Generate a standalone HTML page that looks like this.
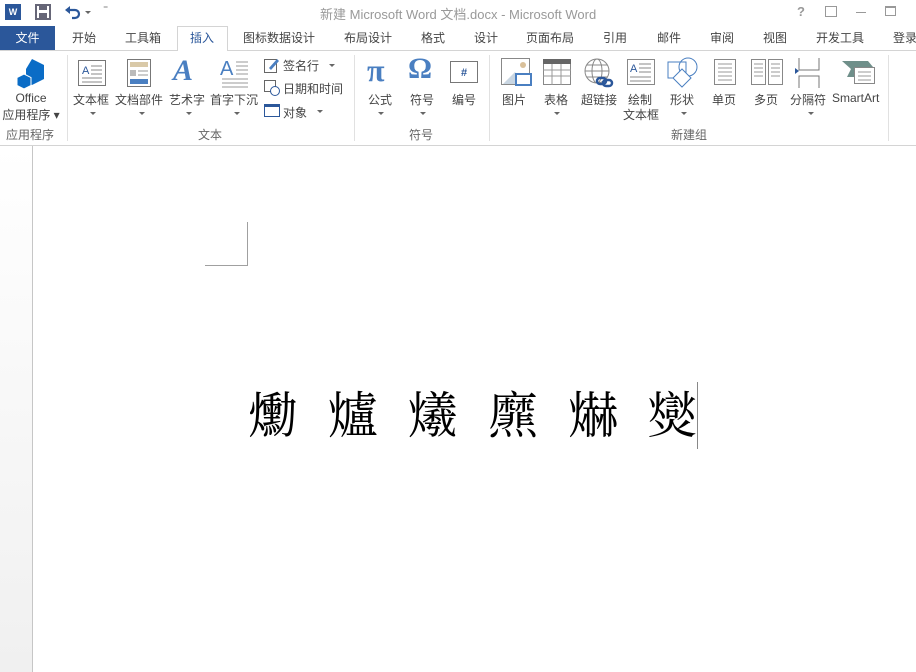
<!DOCTYPE html>
<html><head><meta charset="utf-8"><style>
*{margin:0;padding:0;box-sizing:border-box}
body{width:916px;height:672px;overflow:hidden;background:#fff;font-family:"Liberation Sans","Noto Sans CJK SC",sans-serif;font-size:12px;color:#444;position:relative}
.a{position:absolute;white-space:nowrap}
.tab{position:absolute;top:26px;height:24px;line-height:24px;font-size:12px;color:#444;white-space:nowrap}
.lbl{position:absolute;font-size:12px;color:#444;text-align:center;white-space:nowrap}
.grp{position:absolute;top:126px;font-size:12px;color:#666;white-space:nowrap}
.sep{position:absolute;top:55px;width:1px;height:86px;background:#e1e1e1}
.arr{position:absolute;width:0;height:0;border-left:3px solid transparent;border-right:3px solid transparent;border-top:3px solid #666}
.ch{position:absolute;top:386px;font-family:"Liberation Serif","Noto Serif CJK TC","Noto Serif CJK SC",serif;font-size:50px;color:#000;line-height:60px}
</style></head><body>
<div class="a" style="left:5px;top:4px;width:16px;height:16px;background:#2b579a;color:#fff;font-size:9px;font-weight:bold;line-height:16px;text-align:center">W</div>
<svg class="a" style="left:35px;top:4px" width="16" height="16"><rect x="1" y="1" width="14" height="14" fill="none" stroke="#667" stroke-width="2"/><rect x="4" y="1" width="8" height="5" fill="#667"/><rect x="4" y="9" width="8" height="6" fill="#667"/></svg>
<svg class="a" style="left:64px;top:4px" width="20" height="16"><path d="M4 6 H11 A4 4 0 0 1 11 14 H8" fill="none" stroke="#2b579a" stroke-width="2.2"/><path d="M1 6 L6 2 L6 10 Z" fill="#2b579a"/></svg>
<div class="arr" style="left:85px;top:11px"></div>
<div class="a" style="left:103px;top:4px;color:#666;font-size:10px">⁼</div>
<div class="a" style="left:320px;top:4px;font-size:13px;color:#999">新建 Microsoft Word 文档.docx - Microsoft Word</div>
<div class="a" style="left:797px;top:4px;font-size:13px;color:#999;font-weight:bold">?</div>
<div class="a" style="left:825px;top:6px;width:12px;height:11px;border:1px solid #999"></div>
<div class="a" style="left:856px;top:12px;width:10px;height:1px;background:#999"></div>
<div class="a" style="left:885px;top:6px;width:11px;height:10px;border:1px solid #999;border-top-width:2px"></div>
<div class="a" style="left:0;top:26px;width:55px;height:24px;background:#2b579a;color:#fff;line-height:24px;text-align:center;font-size:12px">文件</div>
<div class="a" style="left:0;top:50px;width:916px;height:1px;background:#d4d4d4"></div>
<div class="a" style="left:177px;top:26px;width:51px;height:25px;background:#fff;border:1px solid #d4d4d4;border-bottom:none"></div>
<div class="tab" style="left:72px">开始</div>
<div class="tab" style="left:125px">工具箱</div>
<div class="tab" style="left:190px;color:#2b579a">插入</div>
<div class="tab" style="left:243px">图标数据设计</div>
<div class="tab" style="left:344px">布局设计</div>
<div class="tab" style="left:421px">格式</div>
<div class="tab" style="left:474px">设计</div>
<div class="tab" style="left:526px">页面布局</div>
<div class="tab" style="left:603px">引用</div>
<div class="tab" style="left:657px">邮件</div>
<div class="tab" style="left:710px">审阅</div>
<div class="tab" style="left:763px">视图</div>
<div class="tab" style="left:816px">开发工具</div>
<div class="tab" style="left:893px">登录</div>
<div class="a" style="left:0;top:145px;width:916px;height:1px;background:#d4d4d4"></div>
<div class="sep" style="left:67px"></div><div class="sep" style="left:354px"></div><div class="sep" style="left:489px"></div><div class="sep" style="left:888px"></div>
<svg class="a" style="left:15px;top:58px" width="32" height="32"><path d="M17 1 L29 7 L29 21 L17 27 L11 24 L11 11 Z" fill="#0a6cc6"/><path d="M9 16 L16 19.5 L16 27.5 L9 31 L2 27.5 L2 19.5 Z" fill="#0a6cc6" stroke="#fff" stroke-width="1"/></svg>
<div class="lbl" style="left:0;top:91px;width:62px">Office</div>
<div class="lbl" style="left:0;top:106px;width:62px">应用程序 ▾</div>
<div class="grp" style="left:6px">应用程序</div>
<svg class="a" style="left:78px;top:60px" width="28" height="26"><rect x="0.5" y="0.5" width="27" height="25" fill="#fff" stroke="#777"/><text x="4" y="14" font-size="11" fill="#2b579a" font-family="Liberation Sans">A</text><path d="M13 6h11M13 10h11M13 14h11M4 18h20M4 22h20" stroke="#888"/></svg>
<div class="lbl" style="left:73px;top:91px">文本框</div><div class="arr" style="left:90px;top:112px"></div>
<svg class="a" style="left:127px;top:59px" width="24" height="28"><rect x="0.5" y="0.5" width="23" height="27" fill="#fff" stroke="#777"/><rect x="3" y="3" width="18" height="5" fill="#d9c9a8"/><rect x="3" y="11" width="6" height="6" fill="#bbb"/><path d="M11 12h10M11 16h10" stroke="#999"/><rect x="3" y="20" width="18" height="5" fill="#4a7fc1"/></svg>
<div class="lbl" style="left:115px;top:91px">文档部件</div><div class="arr" style="left:139px;top:112px"></div>
<div class="a" style="left:173px;top:54px;font-size:30px;font-style:italic;color:#4a7fc1;font-family:'Liberation Serif',serif;font-weight:bold">A</div>
<div class="lbl" style="left:169px;top:91px">艺术字</div><div class="arr" style="left:186px;top:112px"></div>
<svg class="a" style="left:220px;top:58px" width="30" height="30"><text x="0" y="17" font-size="20" fill="#4a7fc1" font-family="Liberation Sans">A</text><path d="M16 4h12M16 8h12M16 12h12M16 16h12M2 21h26M2 25h26M2 29h26" stroke="#999"/></svg>
<div class="lbl" style="left:210px;top:91px">首字下沉</div><div class="arr" style="left:234px;top:112px"></div>
<svg class="a" style="left:264px;top:57px" width="16" height="16"><rect x="0.5" y="2.5" width="12" height="13" fill="none" stroke="#666"/><path d="M5 11 L13 2 L15 4 L7 13 Z" fill="#4a7fc1"/></svg>
<div class="lbl" style="left:283px;top:57px">签名行</div><div class="arr" style="left:329px;top:64px"></div>
<svg class="a" style="left:264px;top:80px" width="16" height="16"><rect x="0.5" y="0.5" width="11" height="11" fill="none" stroke="#666"/><circle cx="11" cy="11" r="4.5" fill="#fff" stroke="#2b579a"/></svg>
<div class="lbl" style="left:283px;top:80px">日期和时间</div>
<div class="a" style="left:264px;top:104px;width:16px;height:13px;border:1px solid #2b579a;border-top-width:3px"></div>
<div class="lbl" style="left:283px;top:104px">对象</div><div class="arr" style="left:317px;top:110px"></div>
<div class="grp" style="left:198px">文本</div>
<div class="a" style="left:367px;top:52px;font-size:32px;color:#4a7fc1;font-family:'Liberation Serif',serif;font-weight:bold">π</div>
<div class="lbl" style="left:368px;top:91px">公式</div><div class="arr" style="left:378px;top:112px"></div>
<div class="a" style="left:408px;top:52px;font-size:30px;color:#4a7fc1;font-family:'Liberation Serif',serif;font-weight:bold">Ω</div>
<div class="lbl" style="left:410px;top:91px">符号</div><div class="arr" style="left:420px;top:112px"></div>
<div class="a" style="left:450px;top:61px;width:28px;height:22px;border:1px solid #777;color:#2b579a;font-size:11px;text-align:center;line-height:22px;font-weight:bold">#</div>
<div class="lbl" style="left:452px;top:91px">编号</div>
<div class="grp" style="left:409px">符号</div>
<svg class="a" style="left:501px;top:58px" width="32" height="32"><rect x="0.5" y="0.5" width="28" height="26" fill="#fff" stroke="#888"/><path d="M2 26 L14 14 L22 26 Z" fill="#c9d6e2"/><circle cx="22" cy="7" r="3" fill="#d9c09a"/><rect x="15" y="16" width="15" height="11" fill="#fff" stroke="#4a7fc1" stroke-width="2"/></svg>
<div class="lbl" style="left:502px;top:91px">图片</div>
<svg class="a" style="left:543px;top:59px" width="28" height="26"><rect x="0.5" y="0.5" width="27" height="25" fill="#fff" stroke="#888"/><rect x="0" y="0" width="28" height="5" fill="#666"/><path d="M0 11h28M0 17h28M9 5v21M18 5v21" stroke="#999"/></svg>
<div class="lbl" style="left:544px;top:91px">表格</div><div class="arr" style="left:554px;top:112px"></div>
<svg class="a" style="left:584px;top:58px" width="30" height="30"><circle cx="13" cy="13" r="12" fill="none" stroke="#888"/><ellipse cx="13" cy="13" rx="5" ry="12" fill="none" stroke="#888"/><path d="M1 13h24M3 7h20M3 19h20" stroke="#888"/><rect x="13" y="20" width="9" height="6" rx="3" fill="none" stroke="#2b579a" stroke-width="2.5"/><rect x="19" y="22" width="9" height="6" rx="3" fill="none" stroke="#2b579a" stroke-width="2.5"/></svg>
<div class="lbl" style="left:581px;top:91px">超链接</div>
<svg class="a" style="left:627px;top:59px" width="28" height="26"><rect x="0.5" y="0.5" width="27" height="25" fill="#fff" stroke="#888"/><text x="3" y="13" font-size="11" fill="#2b579a" font-family="Liberation Sans">A</text><path d="M12 5h12M12 9h12M12 13h12M3 18h21M3 22h21" stroke="#888"/></svg>
<div class="lbl" style="left:628px;top:91px">绘制</div>
<div class="lbl" style="left:623px;top:106px">文本框</div>
<svg class="a" style="left:667px;top:57px" width="32" height="32"><rect x="1" y="5" width="18" height="16" fill="none" stroke="#4a7fc1"/><circle cx="21" cy="10" r="9" fill="none" stroke="#4a7fc1"/><path d="M15 12 L24 21 L15 30 L6 21 Z" fill="#fff" stroke="#4a7fc1"/></svg>
<div class="lbl" style="left:670px;top:91px">形状</div><div class="arr" style="left:681px;top:112px"></div>
<svg class="a" style="left:714px;top:59px" width="22" height="26"><rect x="0.5" y="0.5" width="21" height="25" fill="#fff" stroke="#888"/><path d="M4 5h14M4 9h14M4 13h14M4 17h14M4 21h14" stroke="#999"/></svg>
<div class="lbl" style="left:712px;top:91px">单页</div>
<svg class="a" style="left:751px;top:59px" width="32" height="26"><rect x="0.5" y="0.5" width="14" height="25" fill="#fff" stroke="#888"/><rect x="17.5" y="0.5" width="14" height="25" fill="#fff" stroke="#888"/><path d="M3 5h9M3 9h9M3 13h9M3 17h9M20 5h9M20 9h9M20 13h9M20 17h9" stroke="#999"/></svg>
<div class="lbl" style="left:754px;top:91px">多页</div>
<svg class="a" style="left:794px;top:58px" width="28" height="30"><path d="M5 0v12h20V0M5 30V18h20v12" fill="none" stroke="#777"/><path d="M1 10 L5 13 L1 16 Z" fill="#2b579a"/></svg>
<div class="lbl" style="left:790px;top:91px">分隔符</div><div class="arr" style="left:808px;top:112px"></div>
<svg class="a" style="left:842px;top:59px" width="34" height="26"><path d="M0 2 H26 L31 8 L20 8 L20 18 L5 18 L9 10 Z" fill="#6f8f8a"/><rect x="12.5" y="8.5" width="20" height="16" fill="#fff" stroke="#888"/><path d="M16 13h13M16 17h13M16 21h13" stroke="#999"/></svg>
<div class="lbl" style="left:832px;top:91px">SmartArt</div>
<div class="grp" style="left:671px">新建组</div>
<div class="a" style="left:0;top:146px;width:32px;height:526px;background:linear-gradient(#fff,#f0f0f0)"></div>
<div class="a" style="left:32px;top:146px;width:1px;height:526px;background:#c6c6c6"></div>
<div class="a" style="left:247px;top:222px;width:1px;height:44px;background:#a0a0a0"></div>
<div class="a" style="left:205px;top:265px;width:43px;height:1px;background:#a0a0a0"></div>
<span class="ch" style="left:248px">爋</span>
<span class="ch" style="left:328px">爐</span>
<span class="ch" style="left:408px">爔</span>
<span class="ch" style="left:488px">爢</span>
<span class="ch" style="left:568px">爀</span>
<span class="ch" style="left:647px">爕</span>
<div class="a" style="left:697px;top:382px;width:1px;height:67px;background:#888"></div>
</body></html>
